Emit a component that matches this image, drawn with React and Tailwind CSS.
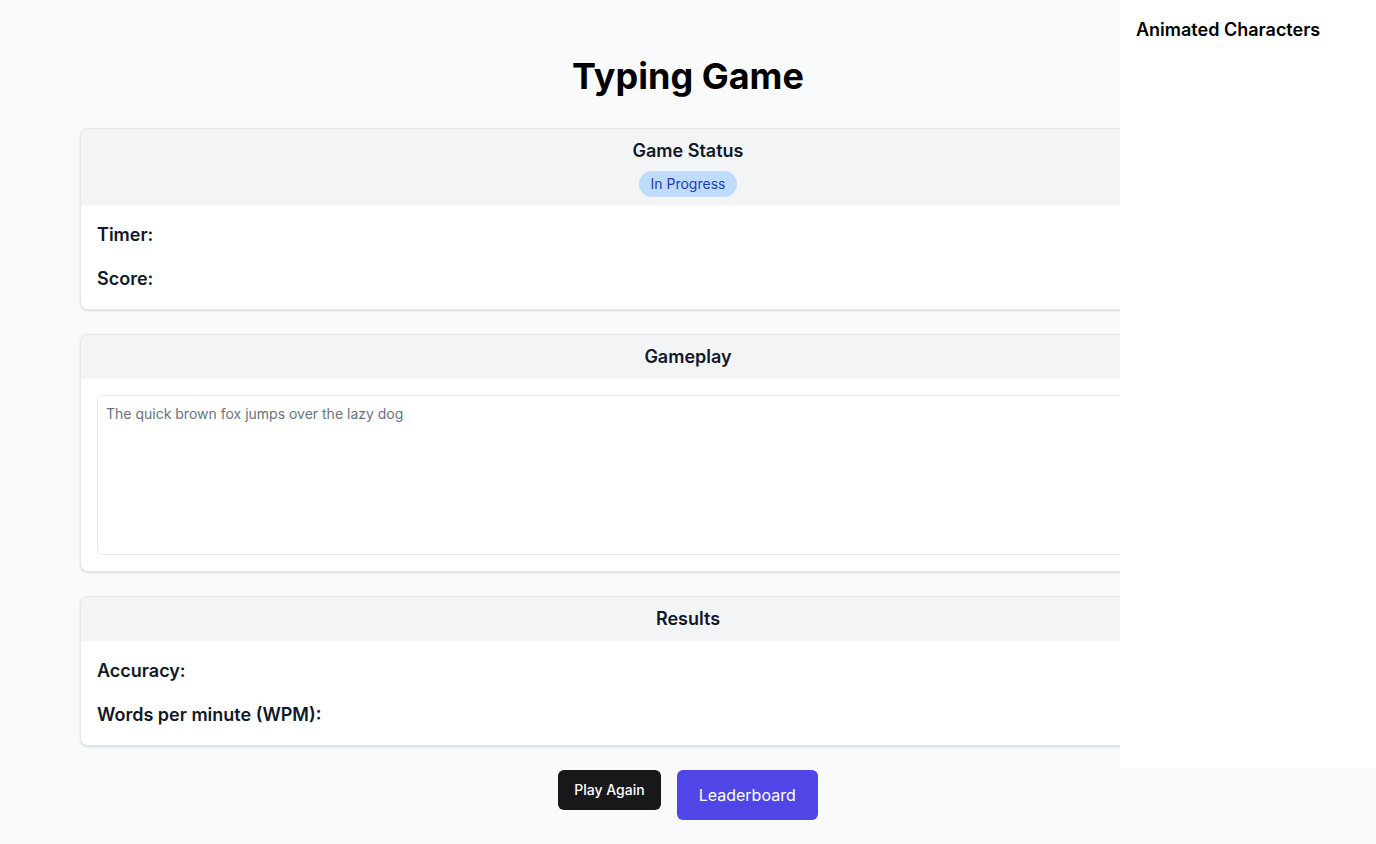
import React from "react";

function Card({ header, children }) {
  return (
    <div className="rounded-lg border border-[#e5e7eb] bg-white shadow-sm overflow-hidden">
      <div className="bg-[#f3f4f6] py-2 flex flex-col items-center">{header}</div>
      <div className="p-4 space-y-4">{children}</div>
    </div>
  );
}

export default function App() {
  return (
    <div
      className="min-h-screen bg-[#f9fafb] text-[#111827]"
      style={{ fontFamily: "Inter, 'Noto Sans', sans-serif" }}
    >
      <div className="mx-auto max-w-[1280px] px-8 pt-14 pb-6">
        <h1 className="text-4xl font-bold text-center text-black mb-8">Typing Game</h1>
        <div className="space-y-6">
          <Card
            header={
              <>
                <h2 className="text-lg font-semibold">Game Status</h2>
                <span className="mt-[6px] rounded-full bg-[#bfdbfe] px-3 py-[3px] text-sm leading-5 text-[#1e40af]">
                  In Progress
                </span>
              </>
            }
          >
            <p className="text-lg font-semibold">Timer:</p>
            <p className="text-lg font-semibold">Score:</p>
          </Card>
          <Card header={<h2 className="text-lg font-semibold">Gameplay</h2>}>
            <textarea
              className="block w-full h-40 rounded-md border border-[#e5e7eb] bg-white p-2 text-sm resize-none placeholder:text-[#6b7280] outline-none"
              placeholder="The quick brown fox jumps over the lazy dog"
            />
          </Card>
          <Card header={<h2 className="text-lg font-semibold">Results</h2>}>
            <p className="text-lg font-semibold">Accuracy:</p>
            <p className="text-lg font-semibold">Words per minute (WPM):</p>
          </Card>
        </div>
        <div className="mt-6 flex items-start justify-center gap-4">
          <button className="h-10 rounded-md bg-[#18181b] px-4 text-sm font-medium text-white">
            Play Again
          </button>
          <button className="h-[50px] rounded-md bg-[#4f46e5] px-[22px] text-base text-white">
            Leaderboard
          </button>
        </div>
      </div>
      <div className="fixed top-0 right-0 w-64 h-[768px] bg-white p-4">
        <h2 className="text-lg font-semibold text-black">Animated Characters</h2>
      </div>
    </div>
  );
}
